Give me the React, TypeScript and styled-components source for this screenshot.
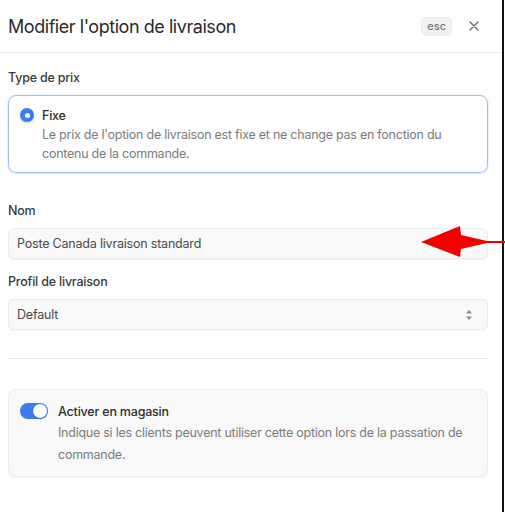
import React from "react";
import styled, { createGlobalStyle } from "styled-components";

const Global = createGlobalStyle`
  html, body { margin: 0; padding: 0; background: #ffffff; }
  body { font-family: Inter, "Noto Sans", sans-serif; -webkit-font-smoothing: antialiased; }
  * { box-sizing: border-box; }
`;

const Page = styled.div`
  position: relative;
  width: 505px;
  height: 512px;
  overflow: hidden;
  background: #fff;
`;

const Drawer = styled.div`
  width: 504px;
  height: 512px;
  border-right: 2px solid #111;
  background: #fff;
  display: flex;
  flex-direction: column;
`;

const Header = styled.div`
  height: 53px;
  display: flex;
  align-items: center;
  justify-content: space-between;
  padding: 0 18px 0 8px;
  border-bottom: 1px solid #ededed;
`;

const Title = styled.h1`
  margin: 0;
  font-size: 18px;
  font-weight: 400;
  color: #2a2a2a;
  letter-spacing: -0.45px;
`;

const HeaderActions = styled.div`
  display: flex;
  align-items: center;
  gap: 12px;
`;

const Kbd = styled.span`
  display: inline-flex;
  align-items: center;
  justify-content: center;
  height: 19px;
  padding: 0 5px;
  border-radius: 5px;
  background: #f1f1f1;
  border: 1px solid #ececec;
  color: #777;
  font-size: 11px;
  font-weight: 500;
`;

const CloseButton = styled.button`
  width: 20px;
  height: 20px;
  padding: 0;
  border: none;
  background: transparent;
  display: inline-flex;
  align-items: center;
  justify-content: center;
  color: #666;
`;

const Body = styled.div`
  padding: 15px 14px 0 8px;
  display: flex;
  flex-direction: column;
`;

const Label = styled.div<{ $top?: number }>`
  font-size: 12.5px;
  letter-spacing: -0.2px;
  line-height: 20px;
  font-weight: 500;
  color: #3a3a3a;
  margin-top: ${(p) => p.$top ?? 0}px;
  margin-bottom: 7px;
`;

const RadioCard = styled.div`
  border: 1px solid #9ebdf3;
  border-radius: 8px;
  padding: 10px 12px 9px 11px;
  display: flex;
  gap: 8px;
  box-shadow: 0 0 0 1px rgba(59, 125, 237, 0.08), 0 1px 2px rgba(0, 0, 0, 0.06);
`;

const RadioDot = styled.span`
  flex: none;
  width: 14px;
  height: 14px;
  margin-top: 2px;
  border-radius: 50%;
  background: #3b7ded;
  display: inline-flex;
  align-items: center;
  justify-content: center;
  box-shadow: 0 1px 2px rgba(59, 125, 237, 0.35);
  &::after {
    content: "";
    width: 5px;
    height: 5px;
    border-radius: 50%;
    background: #fff;
  }
`;

const OptionText = styled.div`
  display: flex;
  flex-direction: column;
`;

const OptionTitle = styled.div`
  font-size: 12.5px;
  letter-spacing: -0.2px;
  line-height: 19px;
  font-weight: 500;
  color: #2f2f2f;
`;

const OptionDesc = styled.div<{ $lh: number }>`
  font-size: 12.5px;
  letter-spacing: -0.25px;
  line-height: ${(p) => p.$lh}px;
  color: #7b7b7b;
`;

const Field = styled.div`
  height: 31px;
  border: 1px solid #ececec;
  border-radius: 6px;
  background: #f9f9f9;
  box-shadow: 0 1px 1px rgba(0, 0, 0, 0.05);
  display: flex;
  align-items: center;
  justify-content: space-between;
  padding: 0 14px 0 8px;
  font-size: 12.5px;
  letter-spacing: -0.2px;
  color: #4a4a4a;
`;

const Divider = styled.hr`
  margin: 28px 0 0;
  border: none;
  border-top: 1px solid #ebebeb;
`;

const ToggleCard = styled.div`
  margin-top: 30px;
  border: 1px solid #ececec;
  border-radius: 8px;
  background: #f9f9f9;
  box-shadow: 0 1px 2px rgba(0, 0, 0, 0.05);
  padding: 12px 12px 10px 11px;
  display: flex;
  gap: 10px;
`;

const Switch = styled.span`
  flex: none;
  position: relative;
  width: 28px;
  height: 16px;
  margin-top: 1px;
  border-radius: 8px;
  background: #3b7ded;
  &::after {
    content: "";
    position: absolute;
    right: 1px;
    top: 1px;
    width: 14px;
    height: 14px;
    border-radius: 50%;
    background: #fff;
    box-shadow: 0 1px 2px rgba(0, 0, 0, 0.25);
  }
`;

const ToggleTitle = styled.div`
  font-size: 12.5px;
  letter-spacing: -0.2px;
  line-height: 20px;
  font-weight: 500;
  color: #2f2f2f;
`;

const Arrow = styled.svg`
  position: absolute;
  left: 0;
  top: 0;
  pointer-events: none;
`;

export default function App() {
  return (
    <Page>
      <Global />
      <Drawer>
        <Header>
          <Title>Modifier l'option de livraison</Title>
          <HeaderActions>
            <Kbd>esc</Kbd>
            <CloseButton aria-label="Fermer">
              <svg width="10" height="10" viewBox="0 0 10 10">
                <path d="M1 1L9 9M9 1L1 9" stroke="currentColor" strokeWidth="1.4" strokeLinecap="round" />
              </svg>
            </CloseButton>
          </HeaderActions>
        </Header>
        <Body>
          <Label>Type de prix</Label>
          <RadioCard>
            <RadioDot />
            <OptionText>
              <OptionTitle>Fixe</OptionTitle>
              <OptionDesc $lh={19}>
                Le prix de l'option de livraison est fixe et ne change pas en fonction du contenu de la commande.
              </OptionDesc>
            </OptionText>
          </RadioCard>

          <Label $top={28}>Nom</Label>
          <Field>Poste Canada livraison standard</Field>

          <Label $top={13}>Profil de livraison</Label>
          <Field>
            Default
            <svg width="8" height="12" viewBox="0 0 8 12">
              <path d="M4 1L7 4.5H1Z" fill="#8a8a8a" />
              <path d="M4 11L7 7.5H1Z" fill="#8a8a8a" />
            </svg>
          </Field>

          <Divider />

          <ToggleCard>
            <Switch />
            <OptionText>
              <ToggleTitle>Activer en magasin</ToggleTitle>
              <OptionDesc $lh={22}>
                Indique si les clients peuvent utiliser cette option lors de la passation de commande.
              </OptionDesc>
            </OptionText>
          </ToggleCard>
        </Body>
      </Drawer>
      <Arrow width="505" height="512" viewBox="0 0 505 512">
        <path d="M421 242 L460 226 L461 235 L487 241 L505 241 L505 243 L487 243 L461 249 L460 257 Z" fill="#f20000" />
      </Arrow>
    </Page>
  );
}
